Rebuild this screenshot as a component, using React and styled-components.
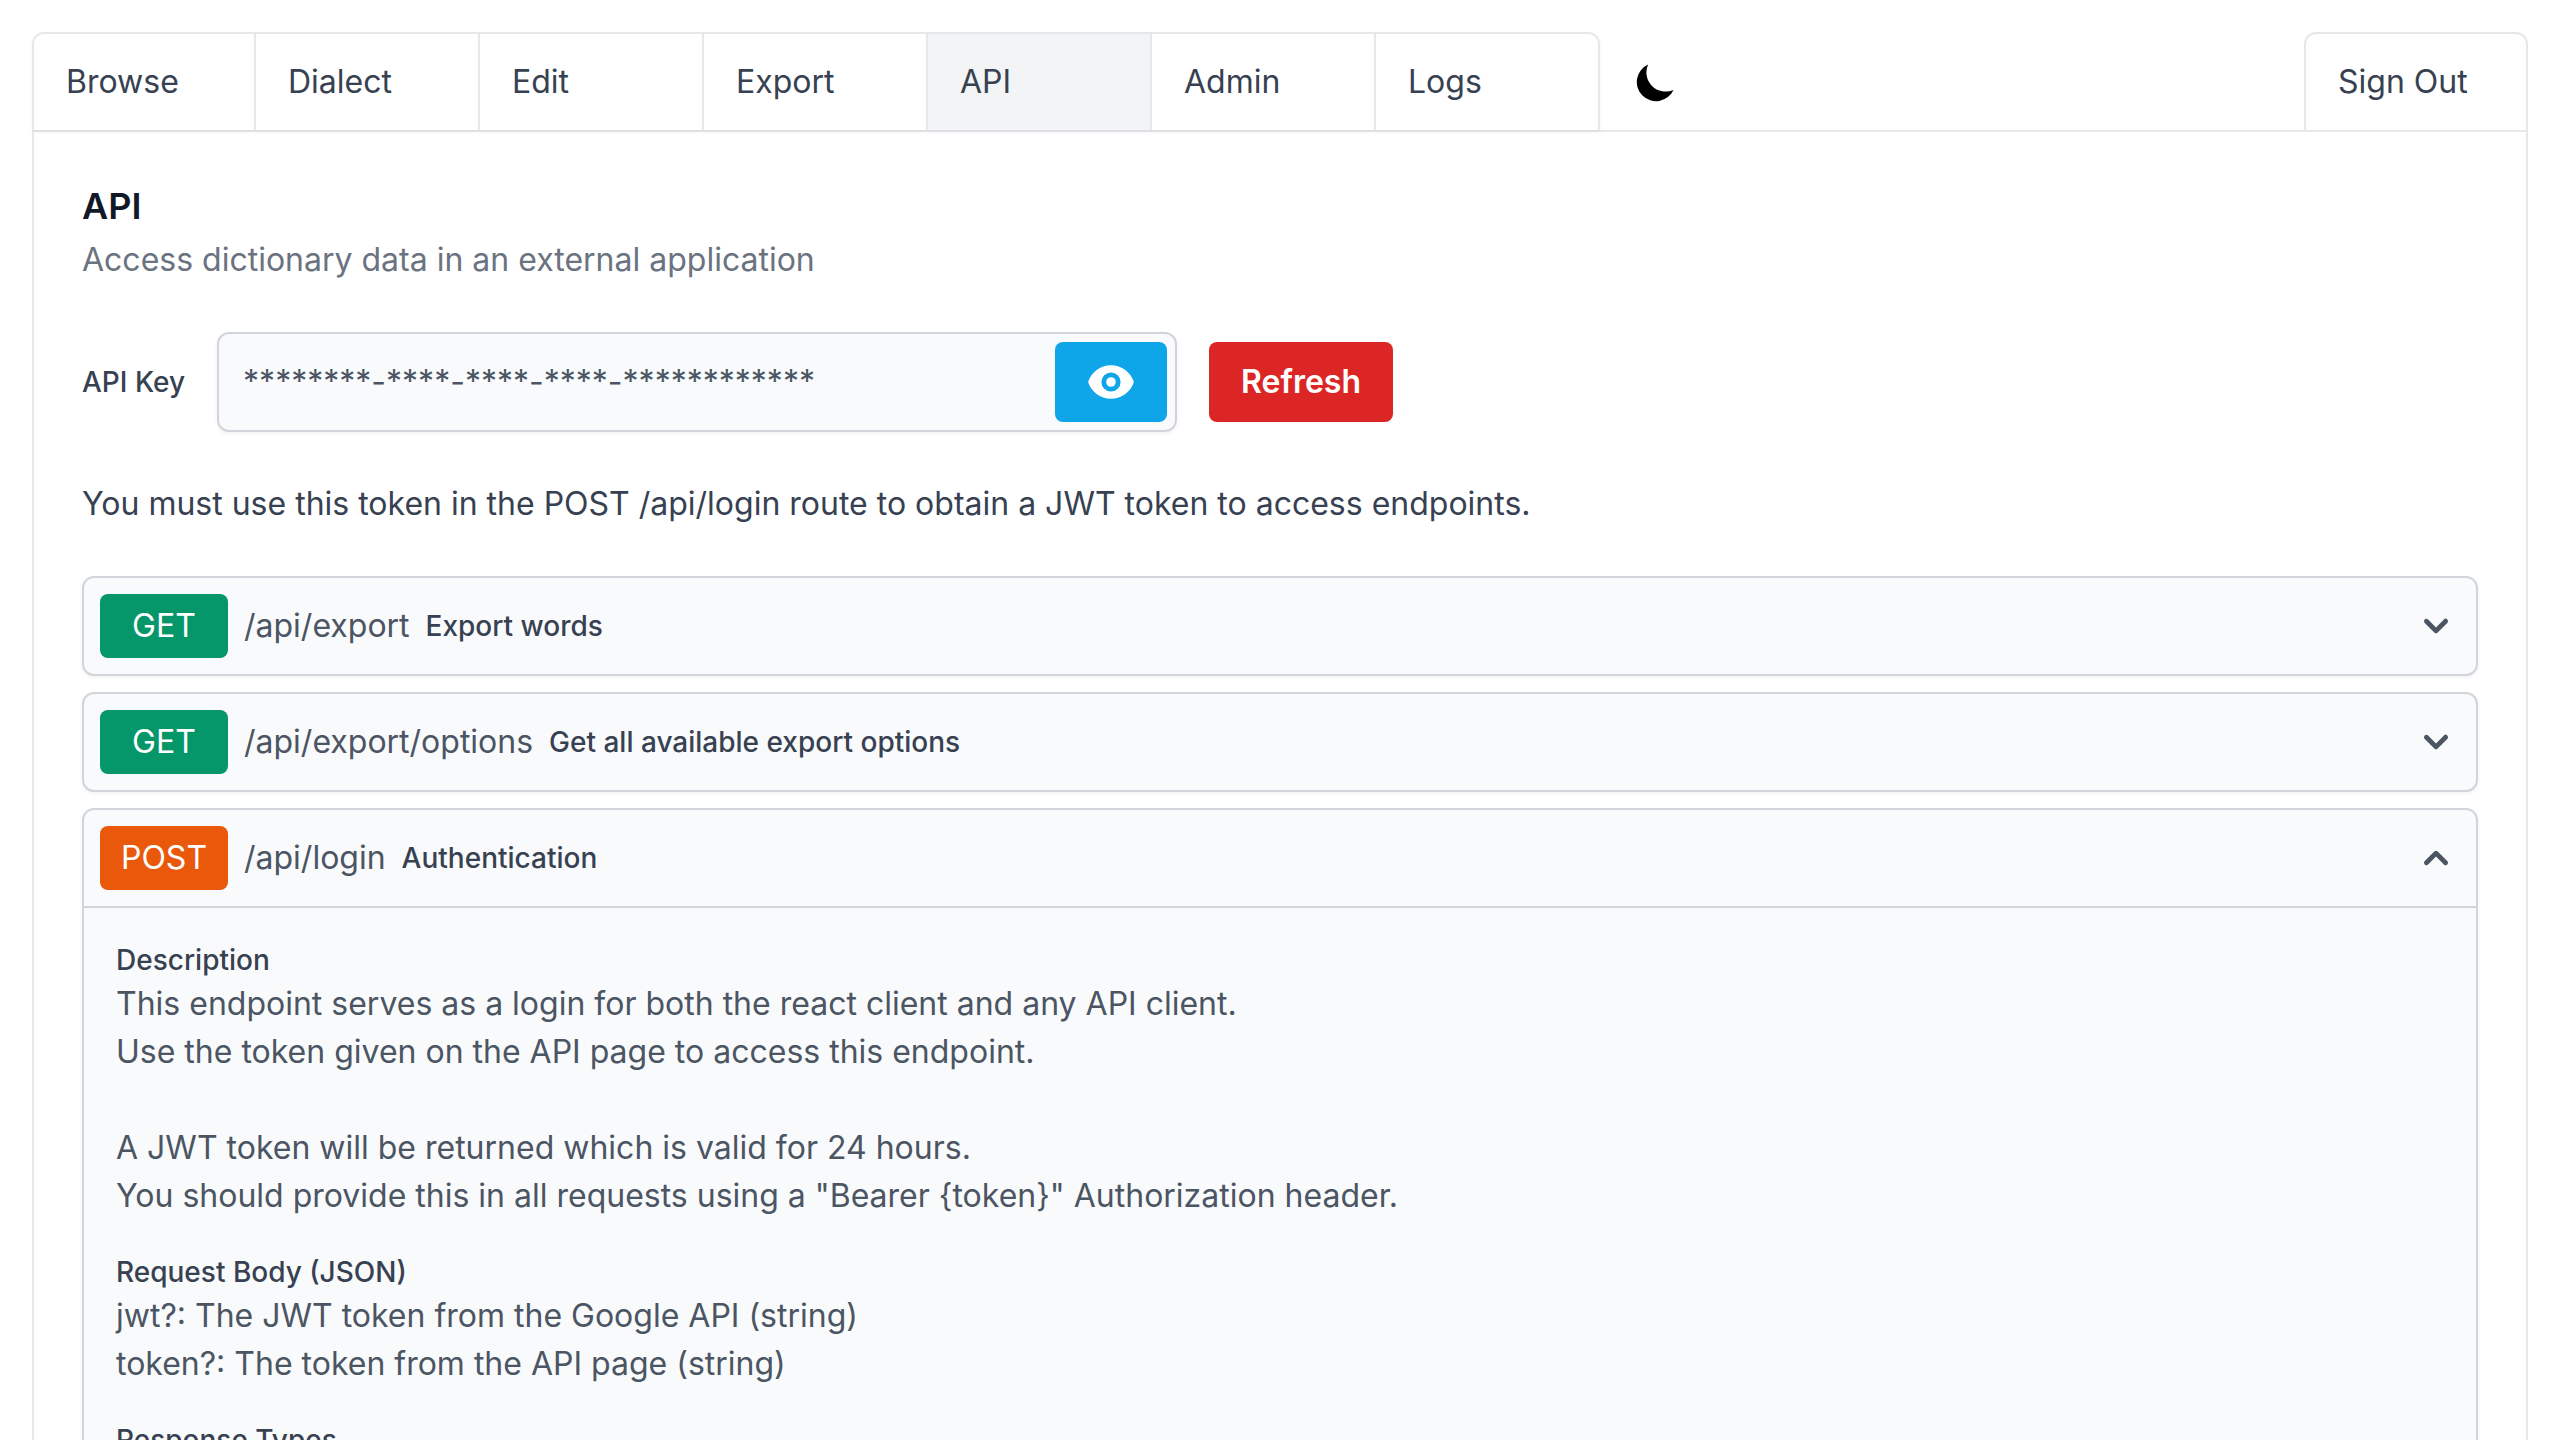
import React, { useState } from "react";
import styled, { createGlobalStyle } from "styled-components";
import { HiChevronDown, HiChevronUp, HiEye, HiMoon } from "react-icons/hi";

const GlobalStyle = createGlobalStyle`
  *, *::before, *::after { box-sizing: border-box; }
  body {
    margin: 0;
    background: #ffffff;
    color: #374151;
    font-family: Inter, "Liberation Sans", sans-serif;
    font-size: 32px;
    line-height: 48px;
  }
  h1, h2, p { margin: 0; }
  button, input { font: inherit; color: inherit; }
`;

const Page = styled.div`
  display: flex;
  flex-direction: column;
  height: 100vh;
  padding: 32px 32px 0;
  overflow-y: auto;
  scrollbar-width: none;
`;

const TopBar = styled.header`
  display: flex;
  flex-shrink: 0;
  align-items: stretch;
  border-bottom: 2px solid #e5e7eb;
`;

const TabList = styled.nav`
  display: flex;
  border: 2px solid #e5e7eb;
  border-bottom: 0;
  border-radius: 12px 12px 0 0;
  box-shadow: 0 2px 4px rgba(0, 0, 0, 0.05);
  overflow: hidden;
`;

const Tab = styled.a`
  width: 224px;
  padding: 24px 32px;
  border-right: 2px solid #e5e7eb;
  background: ${(p) => (p.$active ? "#f3f4f6" : "#ffffff")};
  color: #374151;
  text-decoration: none;

  &:first-child { width: 222px; }
  &:last-child { width: 222px; border-right: 0; }
`;

const ThemeButton = styled.button`
  display: flex;
  align-items: center;
  padding: 0 32px;
  border: 0;
  border-top: 2px solid transparent;
  background: transparent;
  color: #000000;
  cursor: pointer;
`;

const SignOut = styled.button`
  width: 224px;
  margin-left: auto;
  padding: 24px 32px;
  border: 2px solid #e5e7eb;
  border-bottom: 0;
  border-radius: 12px 12px 0 0;
  background: #ffffff;
  text-align: left;
  cursor: pointer;
`;

const Panel = styled.main`
  display: flex;
  flex: 1 0 auto;
  flex-direction: column;
  gap: 48px;
  padding: 48px;
  border: 2px solid #e5e7eb;
  border-width: 0 2px;
`;

const Intro = styled.div`
  display: flex;
  flex-direction: column;
  gap: 4px;
`;

const Title = styled.h1`
  color: #111827;
  font-size: 36px;
  font-weight: 600;
  line-height: 52px;
`;

const Subtitle = styled.p`
  color: #6b7280;
`;

const KeyRow = styled.div`
  display: flex;
  align-items: center;
  gap: 32px;
`;

const KeyLabel = styled.label`
  font-size: 28px;
  font-weight: 500;
  line-height: 40px;
`;

const KeyBox = styled.div`
  display: flex;
  align-items: center;
  width: 960px;
  padding: 8px;
  border: 2px solid #d1d5db;
  border-radius: 12px;
  background: #f9fafb;
  box-shadow: 0 2px 4px rgba(0, 0, 0, 0.05);
`;

const KeyInput = styled.input`
  flex: 1;
  min-width: 0;
  padding: 0 16px;
  border: 0;
  outline: 0;
  background: transparent;
  color: #4b5563;
`;

const ActionButton = styled.button`
  display: flex;
  align-items: center;
  padding: 16px 32px;
  border: 0;
  border-radius: 8px;
  background: ${(p) => p.$color};
  color: #ffffff;
  font-weight: 600;
  cursor: pointer;
`;

const EndpointList = styled.div`
  display: flex;
  flex-direction: column;
  gap: 16px;
`;

const EndpointCard = styled.section`
  border: 2px solid #d1d5db;
  border-radius: 12px;
  background: #f9fafb;
  box-shadow: 0 2px 4px rgba(0, 0, 0, 0.05);
`;

const EndpointHeader = styled.button`
  display: flex;
  align-items: center;
  gap: 16px;
  width: 100%;
  padding: 16px;
  border: 0;
  background: transparent;
  color: #4b5563;
  text-align: left;
  cursor: pointer;

  & > svg { margin-left: auto; }
`;

const Method = styled.span`
  width: 128px;
  padding: 8px 0;
  border-radius: 8px;
  background: ${(p) => (p.$method === "POST" ? "#ea580c" : "#059669")};
  color: #ffffff;
  text-align: center;
`;

const Summary = styled.span`
  color: #374151;
  font-size: 28px;
  font-weight: 500;
  line-height: 40px;
`;

const Details = styled.div`
  display: flex;
  flex-direction: column;
  gap: 32px;
  padding: 32px;
  border-top: 2px solid #d1d5db;
  color: #4b5563;
`;

const DetailTitle = styled.h2`
  color: #374151;
  font-size: 28px;
  font-weight: 500;
  line-height: 40px;
`;

const DetailText = styled.p`
  white-space: pre-line;
`;

const tabs = ["Browse", "Dialect", "Edit", "Export", "API", "Admin", "Logs"];

const endpoints = [
  { method: "GET", path: "/api/export", summary: "Export words", details: [] },
  { method: "GET", path: "/api/export/options", summary: "Get all available export options", details: [] },
  {
    method: "POST",
    path: "/api/login",
    summary: "Authentication",
    open: true,
    details: [
      {
        title: "Description",
        text:
          "This endpoint serves as a login for both the react client and any API client.\n" +
          "Use the token given on the API page to access this endpoint.\n\n" +
          "A JWT token will be returned which is valid for 24 hours.\n" +
          'You should provide this in all requests using a "Bearer {token}" Authorization header.',
      },
      {
        title: "Request Body (JSON)",
        text: "jwt?: The JWT token from the Google API (string)\ntoken?: The token from the API page (string)",
      },
      { title: "Response Types", text: "" },
    ],
  },
];

function Endpoint({ method, path, summary, details, open: initiallyOpen = false }) {
  const [open, setOpen] = useState(initiallyOpen);
  const Chevron = open ? HiChevronUp : HiChevronDown;
  return (
    <EndpointCard>
      <EndpointHeader type="button" aria-expanded={open} onClick={() => setOpen(!open)}>
        <Method $method={method}>{method}</Method>
        <span>{path}</span>
        <Summary>{summary}</Summary>
        <Chevron size={48} />
      </EndpointHeader>
      {open && details.length > 0 && (
        <Details>
          {details.map((d) => (
            <div key={d.title}>
              <DetailTitle>{d.title}</DetailTitle>
              <DetailText>{d.text}</DetailText>
            </div>
          ))}
        </Details>
      )}
    </EndpointCard>
  );
}

export default function App() {
  return (
    <>
      <GlobalStyle />
      <Page>
        <TopBar>
          <TabList>
            {tabs.map((name) => (
              <Tab key={name} href={"#" + name.toLowerCase()} $active={name === "API"}>
                {name}
              </Tab>
            ))}
          </TabList>
          <ThemeButton type="button" aria-label="Toggle dark mode">
            <HiMoon size={48} />
          </ThemeButton>
          <SignOut type="button">Sign Out</SignOut>
        </TopBar>
        <Panel>
          <Intro>
            <Title>API</Title>
            <Subtitle>Access dictionary data in an external application</Subtitle>
          </Intro>
          <KeyRow>
            <KeyLabel htmlFor="api-key">API Key</KeyLabel>
            <KeyBox>
              <KeyInput id="api-key" readOnly value="********-****-****-****-************" />
              <ActionButton type="button" aria-label="Show API key" $color="#0ea5e9">
                <HiEye size={48} />
              </ActionButton>
            </KeyBox>
            <ActionButton type="button" $color="#dc2626">Refresh</ActionButton>
          </KeyRow>
          <p>You must use this token in the POST /api/login route to obtain a JWT token to access endpoints.</p>
          <EndpointList>
            {endpoints.map((e) => (
              <Endpoint key={e.path} {...e} />
            ))}
          </EndpointList>
        </Panel>
      </Page>
    </>
  );
}
